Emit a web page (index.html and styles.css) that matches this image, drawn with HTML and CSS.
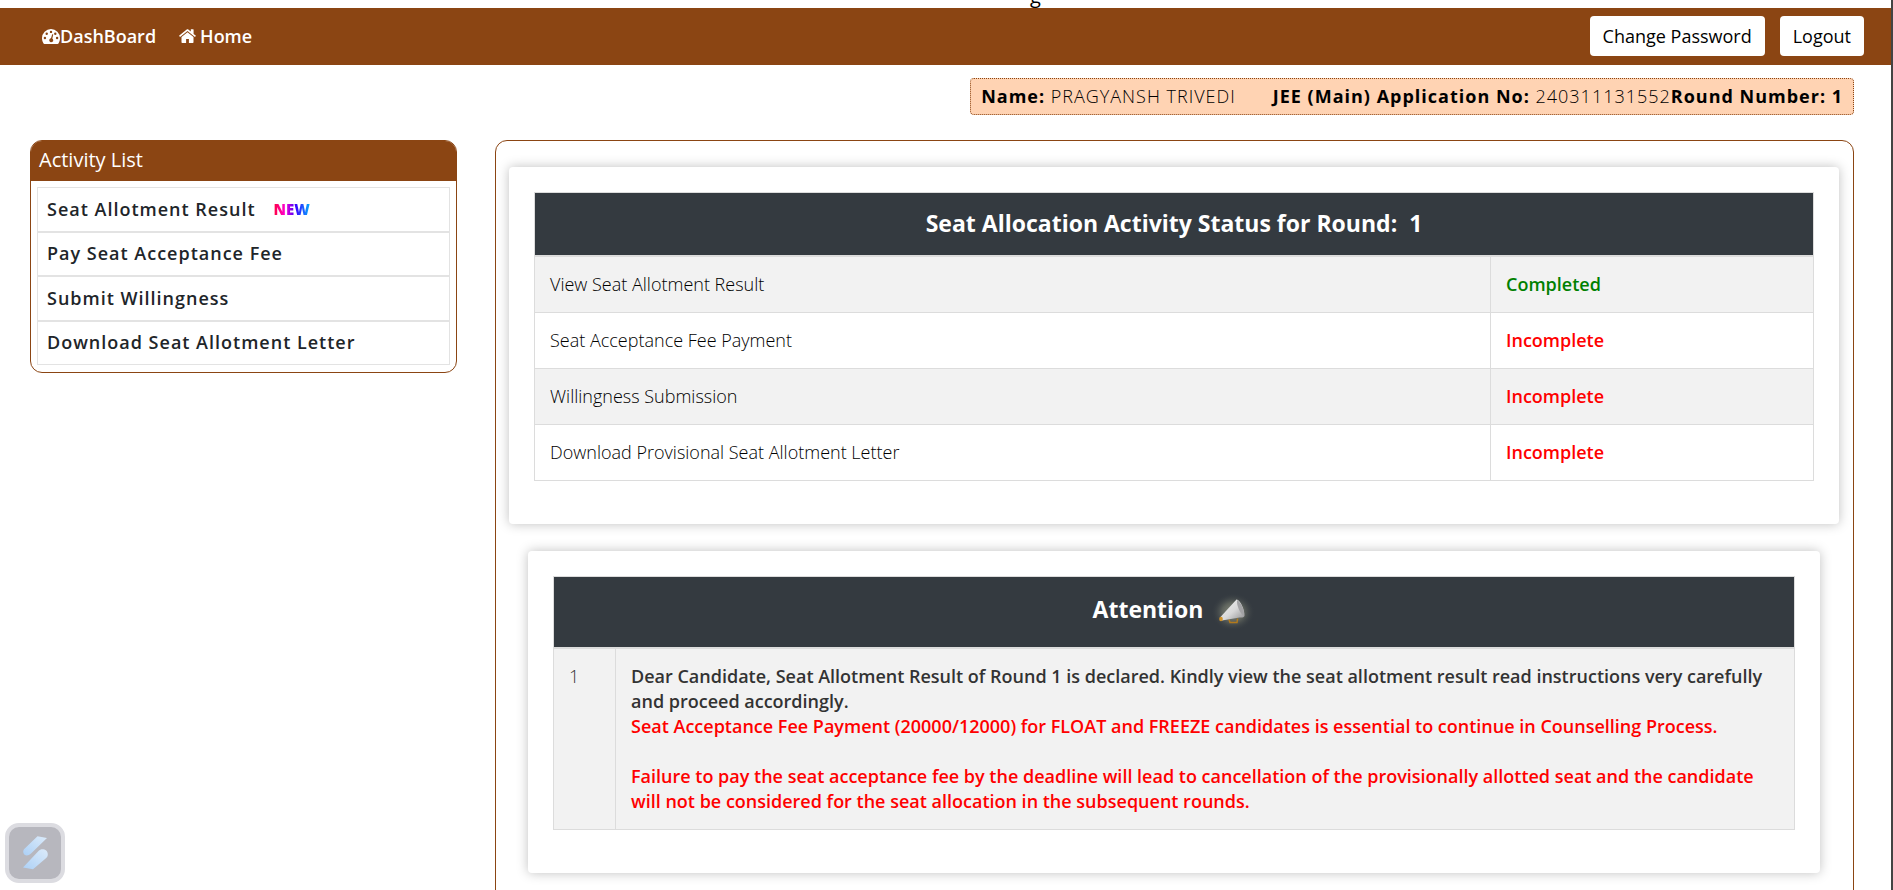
FILE: index.html
```html
<!DOCTYPE html>
<html lang="en">
<head>
<meta charset="utf-8">
<meta name="viewport" content="width=device-width, initial-scale=1">
<title>Candidate Dashboard</title>
<link rel="stylesheet" href="styles.css">
</head>
<body>
<div class="page">
  <div class="masthead"><span>g</span></div>

  <nav class="navbar">
    <div class="nav-links">
      <a class="nav-link" href="#"><svg class="icon-gauge" viewBox="0 0 18 15" aria-hidden="true"><path fill="#fff" d="M9 0a9 9 0 0 1 9 9c0 2-.5 3.700-1.400 5.300-.2.400-.5.600-1 .6H2.400c-.4 0-.8-.2-1-.6A9.500 9.500 0 0 1 0 9a9 9 0 0 1 9-9z"/><g fill="#8b4513"><circle cx="2.900" cy="9" r="1.200"/><circle cx="4.700" cy="4.700" r="1.200"/><circle cx="9" cy="2.900" r="1.200"/><circle cx="13.300" cy="4.700" r="1.200"/><circle cx="15.100" cy="9" r="1.200"/><path d="M10.200 5.300l1.100.3-1 4a2 2 0 1 1-1.300-.3z"/></g></svg>DashBoard</a>
      <a class="nav-link nav-home" href="#"><svg class="icon-home" viewBox="0 0 17 14" aria-hidden="true"><g fill="#fff"><path d="M8.500 3.200L14.500 8v5.200c0 .4-.3.700-.7.700h-3.900v-4H7.100v4H3.200c-.4 0-.7-.3-.7-.7V8z"/><path d="M16.800 7.100l-.6.700c-.1.200-.4.200-.6 0L8.500 2 1.400 7.800c-.2.200-.5.200-.6 0l-.6-.7c-.1-.2-.1-.4.100-.5L7.700.5c.5-.4 1.200-.4 1.600 0l2.500 2.100V.7c0-.3.200-.4.400-.4h2c.2 0 .4.200.4.400v4.200l2.100 1.700c.2.100.2.400.1.500z"/></g></svg>Home</a>
    </div>
    <div class="nav-actions">
      <button class="nav-button" type="button">Change Password</button>
      <button class="nav-button" type="button">Logout</button>
    </div>
  </nav>

  <div class="candidate-row">
    <div class="candidate">
      <span class="candidate-name"><b>Name:</b> PRAGYANSH TRIVEDI</span>
      <span><b>JEE (Main) Application No:</b> 240311131552<b>Round Number: 1</b></span>
    </div>
  </div>

  <div class="content">
    <aside class="activity">
      <h2 class="activity-title">Activity List</h2>
      <ul class="activity-list">
        <li><a href="#">Seat Allotment Result <span class="new-badge">NEW</span></a></li>
        <li><a href="#">Pay Seat Acceptance Fee</a></li>
        <li><a href="#">Submit Willingness</a></li>
        <li><a href="#">Download Seat Allotment Letter</a></li>
      </ul>
    </aside>

    <main class="main">
      <section class="card">
        <table class="table status-table">
          <thead>
            <tr><th colspan="2">Seat Allocation Activity Status for Round:&nbsp; 1</th></tr>
          </thead>
          <tbody>
            <tr><td>View Seat Allotment Result</td><td class="state done">Completed</td></tr>
            <tr><td>Seat Acceptance Fee Payment</td><td class="state pending">Incomplete</td></tr>
            <tr><td>Willingness Submission</td><td class="state pending">Incomplete</td></tr>
            <tr><td>Download Provisional Seat Allotment Letter</td><td class="state pending">Incomplete</td></tr>
          </tbody>
        </table>
      </section>

      <section class="card card-inset">
        <table class="table notice-table">
          <thead>
            <tr><th colspan="2">Attention <svg class="icon-horn" viewBox="0 0 46 40" aria-hidden="true">
              <defs>
                <radialGradient id="glow"><stop offset="0" stop-color="#8c8f80"/><stop offset=".5" stop-color="#5d625c"/><stop offset="1" stop-color="#343a40" stop-opacity="0"/></radialGradient>
                <linearGradient id="horn" x1="0" y1="0" x2="1" y2="1"><stop offset="0" stop-color="#f4f4f4"/><stop offset=".55" stop-color="#d8d8d8"/><stop offset="1" stop-color="#8e8e90"/></linearGradient>
              </defs>
              <ellipse cx="24" cy="20" rx="22" ry="19" fill="url(#glow)"/>
              <path d="M20 27.500l1 3h7l.6-4" fill="none" stroke="#b37a1c" stroke-width="1.500"/>
              <path d="M11 25.500L27.500 7.500c3-.5 8.500 10 8 16.500-1 2-3 1.500-5 1.500L13 28.500z" fill="url(#horn)"/>
              <path d="M28 8c-.5 5 2.500 13 7 16 1-5-3-14-7-16z" fill="#a3a3a5"/>
              <ellipse cx="12" cy="27" rx="1.800" ry="2.300" fill="#cf9229"/>
            </svg></th></tr>
          </thead>
          <tbody>
            <tr>
              <td class="serial">1</td>
              <td class="notice">
                <p>Dear Candidate, Seat Allotment Result of Round 1 is declared. Kindly view the seat allotment result read instructions very carefully and proceed accordingly.</p>
                <p class="pending">Seat Acceptance Fee Payment (20000/12000) for FLOAT and FREEZE candidates is essential to continue in Counselling Process.</p>
                <p class="pending notice-gap">Failure to pay the seat acceptance fee by the deadline will lead to cancellation of the provisionally allotted seat and the candidate will not be considered for the seat allocation in the subsequent rounds.</p>
              </td>
            </tr>
          </tbody>
        </table>
      </section>
    </main>
  </div>
</div>

<button class="widget" type="button" aria-label="Open assistant">
  <svg viewBox="0 0 52 52" aria-hidden="true">
    <defs>
      <linearGradient id="blue" x1="1" y1="0" x2="0" y2="1"><stop offset="0" stop-color="#dcebfa"/><stop offset="1" stop-color="#acd0f6"/></linearGradient>
    </defs>
    <path d="M28.500 9.300L38 11 22 26.500c-3 3-7 2.500-7.700-1-.3-1.500.2-2.800 1.200-3.800z" fill="url(#blue)"/>
    <path d="M24 42.300L14 40.500 29.500 24c3-3.200 9.500-1.500 9.300 3.500 0 1.500-.6 2.500-1.600 3.500z" fill="url(#blue)"/>
  </svg>
</button>
</body>
</html>
```
FILE: styles.css
```css
* {
  box-sizing: border-box;
}

body {
  margin: 0;
  overflow: hidden;
  background: #fff;
  color: #000;
  font: 400 18px/25px "Open Sans", "Noto Sans", sans-serif;
}

.page {
  min-height: 100vh;
  border-right: 2px solid #444;
}

.masthead {
  display: flex;
  align-items: flex-end;
  justify-content: center;
  height: 8px;
  padding-left: 180px;
  overflow: hidden;
  font-size: 20px;
  line-height: 25px;
}

/* Navigation */
.navbar {
  display: flex;
  align-items: center;
  justify-content: space-between;
  padding: 8px 27px 9px 42px;
  background: #8b4513;
}

.nav-links,
.nav-actions {
  display: flex;
  align-items: center;
}

.nav-links {
  gap: 23px;
}

.nav-actions {
  gap: 15px;
}

.nav-link {
  display: flex;
  align-items: center;
  color: #fff;
  font-weight: 600;
  text-decoration: none;
}

.nav-home {
  gap: 4px;
}

.icon-gauge {
  width: 18px;
  height: 15px;
}

.icon-home {
  width: 17px;
  height: 14px;
}

.nav-button {
  height: 40px;
  padding: 0 13px;
  border: 0;
  border-radius: 4px;
  background: #fff;
  color: #000;
  font: inherit;
  font-weight: 500;
}

/* Candidate details */
.candidate-row {
  display: flex;
  justify-content: flex-end;
  padding: 13px 37px 0;
}

.candidate {
  display: flex;
  gap: 37px;
  padding: 5px 10px;
  border: 1px dotted #8b4513;
  border-radius: 4px;
  background: #ffd3b3;
  font-weight: 350;
  letter-spacing: 1px;
}

.candidate b {
  font-weight: 700;
}

/* Columns */
.content {
  display: flex;
  align-items: flex-start;
  gap: 38px;
  padding: 25px 37px 0 30px;
}

.activity {
  flex: 0 0 427px;
  overflow: hidden;
  border: 1px solid #8b4513;
  border-radius: 12px;
}

.activity-title {
  margin: 0;
  padding: 6px 8px 9px;
  background: #8b4513;
  color: #fff;
  font-size: 20px;
  font-weight: 400;
  line-height: 25px;
}

.activity-list {
  display: grid;
  grid-auto-rows: 1fr;
  min-height: 191px;
  margin: 0;
  padding: 6px 6px 7px;
  list-style: none;
}

.activity-list a {
  display: flex;
  align-items: center;
  gap: 18px;
  height: 100%;
  padding: 0 9px;
  border: 1px solid #e3e3e3;
  color: #212529;
  font-weight: 550;
  letter-spacing: 1px;
  text-decoration: none;
}

.new-badge {
  background: linear-gradient(90deg, #ff0040, #ff00d0 30%, #3a00ff 60%, #00b0ff);
  background-clip: text;
  -webkit-background-clip: text;
  color: transparent;
  font-size: 15px;
  font-weight: 800;
  letter-spacing: 0;
}

.main {
  flex: 1;
  min-width: 0;
  padding: 26px 14px 30px 13px;
  border: 1px solid #8b4513;
  border-radius: 12px;
}

.card {
  padding: 25px 25px 43px;
  border-radius: 4px;
  box-shadow: 0 0 12px rgba(0, 0, 0, 0.25);
}

.card-inset {
  margin: 27px 19px 0;
}

/* Tables */
.table {
  width: 100%;
  border-collapse: collapse;
}

.table th,
.table td {
  padding: 15px;
  border: 1px solid #dcdcdc;
  text-align: left;
  vertical-align: top;
}

.table td {
  font-weight: 350;
}

.table th {
  padding: 18px 15px 19px;
  border-bottom-width: 2px;
  background: #343a40;
  color: #fff;
  font-size: 23px;
  font-weight: 700;
  text-align: center;
}

.table tbody tr:nth-child(odd) {
  background: #f2f2f2;
}

.table .state {
  width: 323px;
  font-weight: 650;
}

.done {
  color: #008000;
}

.pending {
  color: #f00;
}

.icon-horn {
  width: 46px;
  height: 40px;
  vertical-align: middle;
}

.notice-table th {
  padding: 15px;
}

.serial {
  width: 62px;
  color: #333;
}

.table .notice {
  color: #333;
  font-weight: 600;
}

.notice p {
  margin: 0;
}

.notice .notice-gap {
  margin-top: 25px;
}

/* Floating assistant button */
.widget {
  position: fixed;
  bottom: 7px;
  left: 5px;
  width: 60px;
  height: 60px;
  padding: 0;
  border: 4px solid #dcdce1;
  border-radius: 14px;
  background: #b7b7be;
}

.widget svg {
  display: block;
  width: 52px;
  height: 52px;
}
```
